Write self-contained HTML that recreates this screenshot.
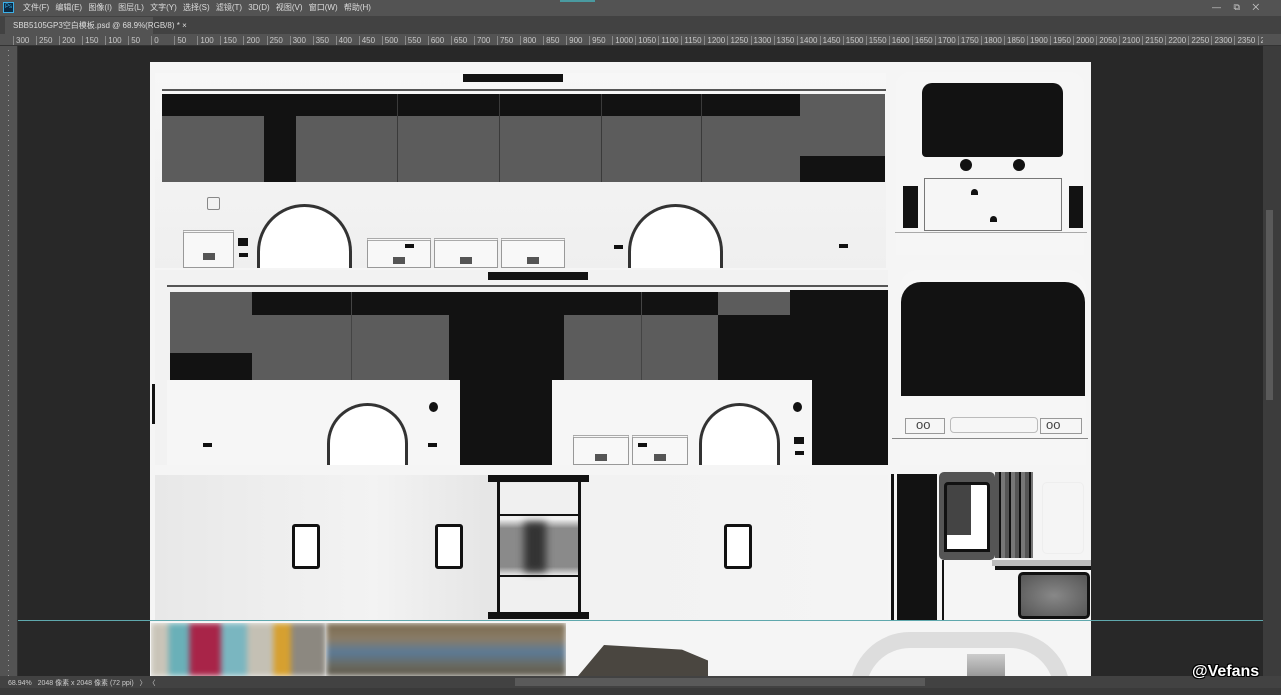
<!DOCTYPE html>
<html><head><meta charset="utf-8"><style>
*{margin:0;padding:0;box-sizing:border-box}
body{width:1281px;height:695px;overflow:hidden;background:#282828;font-family:"Liberation Sans","Noto Sans CJK SC",sans-serif;position:relative}
.a{position:absolute}
.k{position:absolute;background:#121212}
.g{position:absolute;background:#5c5c5c}
.w{position:absolute;background:#f3f3f3}
.arch{position:absolute;border:3px solid #333;border-bottom:none;border-radius:48px 48px 0 0;background:#fff}
.win{position:absolute;border:3px solid #111;border-radius:3px;background:#fff}
.box{position:absolute;border:1px solid #999;border-top:3px double #aaa;background:#f8f8f8}
.box i{position:absolute;left:50%;top:60%;width:12px;height:7px;margin-left:-6px;background:#555}
.sm{position:absolute;background:#111;width:9px;height:4px}
.dv{position:absolute;width:1px;background:#3a3a3a}
#rl{position:absolute;left:13px;top:36px;display:flex;font-size:8px;color:#c8c8c8;white-space:nowrap;width:1250px;overflow:hidden}
#rl span{flex:0 0 23.05px;border-left:1px solid #888;padding-left:2px;line-height:9px;overflow:hidden}
</style></head><body>
<!-- menu -->
<div class="a" style="left:0;top:0;width:1281px;height:16px;background:#535353"></div>
<div class="a" style="left:3px;top:2px;width:11px;height:11px;background:#0b2a44;border:1px solid #3bb0e8;color:#3bb0e8;font-size:6px;line-height:9px;text-align:center">Ps</div>
<div class="a" style="left:23px;top:2px;font-size:8px;color:#ddd;word-spacing:4px;white-space:nowrap">文件(F) 编辑(E) 图像(I) 图层(L) 文字(Y) 选择(S) 滤镜(T) 3D(D) 视图(V) 窗口(W) 帮助(H)</div>
<div class="a" style="left:560px;top:0;width:35px;height:2px;background:#4a9aa0"></div>
<div class="a" style="left:1212px;top:2px;font-size:9px;color:#ccc;word-spacing:10px">— ⧉ ✕</div>
<!-- tab bar -->
<div class="a" style="left:0;top:16px;width:1281px;height:18px;background:#424242"></div>
<div class="a" style="left:5px;top:17px;width:148px;height:17px;background:#535353;font-size:8px;color:#ddd;padding:3px 0 0 8px;white-space:nowrap">SBB5105GP3空白模板.psd @ 68.9%(RGB/8) * ×</div>
<!-- rulers -->
<div class="a" style="left:0;top:34px;width:1281px;height:12px;background:#535353;border-bottom:1px solid #333"></div>
<div id="rl"><span>300</span><span>250</span><span>200</span><span>150</span><span>100</span><span>50</span><span>0</span><span>50</span><span>100</span><span>150</span><span>200</span><span>250</span><span>300</span><span>350</span><span>400</span><span>450</span><span>500</span><span>550</span><span>600</span><span>650</span><span>700</span><span>750</span><span>800</span><span>850</span><span>900</span><span>950</span><span>1000</span><span>1050</span><span>1100</span><span>1150</span><span>1200</span><span>1250</span><span>1300</span><span>1350</span><span>1400</span><span>1450</span><span>1500</span><span>1550</span><span>1600</span><span>1650</span><span>1700</span><span>1750</span><span>1800</span><span>1850</span><span>1900</span><span>1950</span><span>2000</span><span>2050</span><span>2100</span><span>2150</span><span>2200</span><span>2250</span><span>2300</span><span>2350</span><span>2400</span></div>
<div class="a" style="left:0;top:46px;width:18px;height:630px;background:#535353;border-right:1px solid #333"></div>
<div class="a" style="left:8px;top:46px;width:1px;height:630px;background:repeating-linear-gradient(#535353 0 4px,#999 4px 5px)"></div>
<!-- right scrollbar -->
<div class="a" style="left:1263px;top:46px;width:18px;height:630px;background:#3c3c3c"></div>
<div class="a" style="left:1266px;top:210px;width:7px;height:190px;background:#5a5a5a"></div>
<!-- status -->
<div class="a" style="left:0;top:676px;width:1281px;height:12px;background:#424242"></div>
<div class="a" style="left:8px;top:678px;font-size:7px;color:#ccc;white-space:nowrap">68.94%&nbsp;&nbsp;&nbsp;2048 像素 x 2048 像素 (72 ppi)&nbsp;&nbsp;&nbsp;〉 〈</div>
<div class="a" style="left:515px;top:678px;width:410px;height:8px;background:#5a5a5a"></div>
<div class="a" style="left:0;top:688px;width:1281px;height:7px;background:#3a3a3a"></div>

<div class="a" style="left:0;top:0;width:1281px;height:676px;overflow:hidden">
<!-- document -->
<div class="a" style="left:150px;top:62px;width:941px;height:614px;background:#f5f5f5"></div>
<!-- side 1 -->
<div class="a" style="left:155px;top:73px;width:731px;height:195px;background:linear-gradient(#f7f7f7,#efefef)"></div>
<div class="k" style="left:463px;top:74px;width:100px;height:8px"></div>
<div class="k" style="left:162px;top:89px;width:724px;height:2px;background:#555"></div>
<div class="k" style="left:162px;top:94px;width:638px;height:22px"></div>
<div class="g" style="left:162px;top:116px;width:638px;height:66px"></div>
<div class="dv" style="left:397px;top:94px;height:88px"></div>
<div class="dv" style="left:499px;top:94px;height:88px"></div>
<div class="dv" style="left:601px;top:94px;height:88px"></div>
<div class="dv" style="left:701px;top:94px;height:88px"></div>
<div class="k" style="left:264px;top:94px;width:32px;height:88px"></div>
<div class="g" style="left:800px;top:94px;width:85px;height:62px"></div>
<div class="k" style="left:800px;top:156px;width:85px;height:26px"></div>
<div class="a" style="left:207px;top:197px;width:13px;height:13px;border:1px solid #888;border-radius:2px"></div>
<div class="box" style="left:183px;top:230px;width:51px;height:38px"><i></i></div>
<div class="k" style="left:238px;top:238px;width:10px;height:8px"></div><div class="sm" style="left:239px;top:253px"></div>
<div class="arch" style="left:257px;top:204px;width:95px;height:64px"></div>
<div class="box" style="left:367px;top:238px;width:64px;height:30px"><i></i></div>
<div class="box" style="left:434px;top:238px;width:64px;height:30px"><i></i></div>
<div class="box" style="left:501px;top:238px;width:64px;height:30px"><i></i></div>
<div class="sm" style="left:405px;top:244px"></div>
<div class="sm" style="left:614px;top:245px"></div>
<div class="arch" style="left:628px;top:204px;width:95px;height:64px"></div>
<div class="sm" style="left:839px;top:244px"></div>
<!-- side 2 -->
<div class="a" style="left:155px;top:270px;width:733px;height:195px;background:#f2f2f2"></div>
<div class="k" style="left:488px;top:272px;width:100px;height:8px"></div>
<div class="k" style="left:167px;top:285px;width:721px;height:2px;background:#555"></div>
<div class="g" style="left:170px;top:292px;width:82px;height:61px"></div>
<div class="k" style="left:170px;top:353px;width:82px;height:27px"></div>
<div class="k" style="left:252px;top:292px;width:197px;height:23px"></div>
<div class="g" style="left:252px;top:315px;width:197px;height:65px"></div>
<div class="k" style="left:449px;top:292px;width:115px;height:173px"></div>
<div class="k" style="left:564px;top:292px;width:154px;height:23px"></div>
<div class="g" style="left:564px;top:315px;width:154px;height:65px"></div>
<div class="g" style="left:718px;top:292px;width:74px;height:23px"></div>
<div class="k" style="left:718px;top:315px;width:74px;height:65px"></div>
<div class="k" style="left:790px;top:290px;width:98px;height:175px"></div>
<div class="a" style="left:351px;top:292px;width:1px;height:88px;background:#444"></div>
<div class="a" style="left:641px;top:292px;width:1px;height:88px;background:#444"></div>
<div class="w" style="left:167px;top:380px;width:293px;height:85px;background:#f6f6f6"></div>
<div class="w" style="left:552px;top:380px;width:260px;height:85px;background:#f6f6f6"></div>
<div class="k" style="left:152px;top:384px;width:3px;height:40px"></div>
<div class="arch" style="left:327px;top:403px;width:81px;height:62px"></div>
<div class="arch" style="left:699px;top:403px;width:81px;height:62px"></div>
<div class="k" style="left:429px;top:402px;width:9px;height:10px;border-radius:50%"></div>
<div class="k" style="left:793px;top:402px;width:9px;height:10px;border-radius:50%"></div>
<div class="sm" style="left:203px;top:443px"></div><div class="sm" style="left:428px;top:443px"></div>
<div class="box" style="left:573px;top:435px;width:56px;height:30px"><i></i></div>
<div class="box" style="left:632px;top:435px;width:56px;height:30px"><i></i></div>
<div class="sm" style="left:638px;top:443px"></div>
<div class="k" style="left:794px;top:437px;width:10px;height:7px"></div><div class="sm" style="left:795px;top:451px"></div>
<!-- rear view -->
<div class="a" style="left:896px;top:72px;width:188px;height:183px;background:#f6f6f6;border-radius:14px 14px 0 0"></div>
<div class="a" style="left:922px;top:83px;width:141px;height:74px;background:#121212;border-radius:10px 10px 4px 4px"></div>
<div class="k" style="left:960px;top:159px;width:12px;height:12px;border-radius:50%"></div>
<div class="k" style="left:1013px;top:159px;width:12px;height:12px;border-radius:50%"></div>
<div class="a" style="left:924px;top:178px;width:138px;height:53px;border:1px solid #777"></div>
<div class="k" style="left:971px;top:189px;width:7px;height:6px;border-radius:4px 4px 0 0"></div>
<div class="k" style="left:990px;top:216px;width:7px;height:6px;border-radius:4px 4px 0 0"></div>
<div class="k" style="left:903px;top:186px;width:15px;height:42px"></div>
<div class="k" style="left:1069px;top:186px;width:14px;height:42px"></div>
<div class="a" style="left:895px;top:232px;width:192px;height:1px;background:#aaa"></div>
<!-- front view -->
<div class="a" style="left:900px;top:270px;width:186px;height:195px;background:#f6f6f6;border-radius:18px 18px 0 0"></div>
<div class="a" style="left:901px;top:282px;width:184px;height:114px;background:#121212;border-radius:20px 20px 0 0"></div>
<div class="a" style="left:905px;top:418px;width:40px;height:16px;border:1px solid #999;font-size:13px;line-height:12px;color:#444;padding-left:10px">oo</div>
<div class="a" style="left:1040px;top:418px;width:42px;height:16px;border:1px solid #999;font-size:13px;line-height:12px;color:#444;padding-left:5px">oo</div>
<div class="a" style="left:950px;top:417px;width:88px;height:16px;border:1px solid #bbb;border-radius:4px"></div>
<div class="a" style="left:892px;top:438px;width:196px;height:1px;background:#888"></div>
<!-- roof -->
<div class="a" style="left:155px;top:475px;width:733px;height:145px;background:linear-gradient(90deg,#e8e8e8,#f3f3f3 30%,#e6e6e6 45%,#f2f2f2 60%,#f4f4f4)"></div>
<div class="k" style="left:488px;top:475px;width:101px;height:7px"></div>
<div class="k" style="left:488px;top:612px;width:101px;height:7px"></div>
<div class="a" style="left:500px;top:483px;width:78px;height:129px;background:linear-gradient(#f0f0f0 0 28%,#8a8a8a 35%,#8a8a8a 65%,#f0f0f0 72%)"></div>
<div class="a" style="left:524px;top:522px;width:22px;height:50px;background:#333;filter:blur(4px)"></div>
<div class="k" style="left:497px;top:480px;width:3px;height:134px"></div>
<div class="k" style="left:578px;top:480px;width:3px;height:134px"></div>
<div class="k" style="left:500px;top:514px;width:78px;height:2px"></div>
<div class="k" style="left:500px;top:575px;width:78px;height:2px"></div>
<div class="win" style="left:292px;top:524px;width:28px;height:45px"></div>
<div class="win" style="left:435px;top:524px;width:28px;height:45px"></div>
<div class="win" style="left:724px;top:524px;width:28px;height:45px"></div>
<!-- bottom right pieces -->
<div class="k" style="left:891px;top:474px;width:3px;height:146px"></div>
<div class="k" style="left:897px;top:474px;width:40px;height:146px"></div>
<div class="a" style="left:939px;top:472px;width:56px;height:88px;background:#555;border-radius:5px"></div>
<div class="a" style="left:944px;top:482px;width:46px;height:70px;border:3px solid #111;border-radius:4px;background:linear-gradient(90deg,#444 0 60%,#fff 60%)"></div>
<div class="a" style="left:944px;top:535px;width:46px;height:17px;background:#fff;border:3px solid #111;border-top:none"></div>
<div class="a" style="left:995px;top:472px;width:38px;height:86px;background:repeating-linear-gradient(90deg,#555 0 4px,#111 4px 6px,#777 6px 10px)"></div>
<div class="a" style="left:1042px;top:482px;width:42px;height:72px;border:1px solid #eee;border-radius:5px"></div>
<div class="k" style="left:942px;top:560px;width:2px;height:60px"></div>
<div class="a" style="left:992px;top:560px;width:99px;height:6px;background:#bbb"></div>
<div class="k" style="left:995px;top:566px;width:96px;height:4px"></div>
<div class="a" style="left:1018px;top:572px;width:72px;height:47px;border:3px solid #111;border-radius:5px;background:radial-gradient(#888,#555)"></div>
<!-- guide line -->
<div class="a" style="left:18px;top:620px;width:1245px;height:1px;background:#5fa8ad"></div>
<!-- bottom photos -->
<div class="a" style="left:151px;top:623px;width:175px;height:53px;overflow:hidden"><div style="width:100%;height:100%;filter:blur(3px);background:linear-gradient(90deg,#c9c4b8 0 10%,#6ab0b8 10% 22%,#a82448 22% 40%,#7ab6c0 40% 55%,#c4c0b4 55% 70%,#d6a030 70% 80%,#8c8880 80%)"></div></div>
<div class="a" style="left:326px;top:623px;width:240px;height:53px;overflow:hidden"><div style="width:100%;height:100%;filter:blur(3px);background:linear-gradient(#7a6a50,#8a7c66 30%,#5a7a98 55%,#6a6a60 80%,#5c5648)"></div></div>
<div class="a" style="left:578px;top:645px;width:130px;height:31px;background:#4a4640;clip-path:polygon(0 100%,20% 0,80% 15%,100% 50%,100% 100%)"></div>
<div class="a" style="left:850px;top:632px;width:220px;height:60px;border:16px solid #ddd;border-bottom:none;border-radius:110px 110px 0 0"></div>
<div class="a" style="left:967px;top:654px;width:38px;height:22px;background:linear-gradient(#ccc,#999)"></div>
</div>
<div class="a" style="left:1192px;top:663px;font-size:16px;color:#fff;font-weight:bold;text-shadow:1px 1px 0 #000,-1px -1px 0 #000,1px -1px 0 #000,-1px 1px 0 #000">@Vefans</div>
</body></html>
